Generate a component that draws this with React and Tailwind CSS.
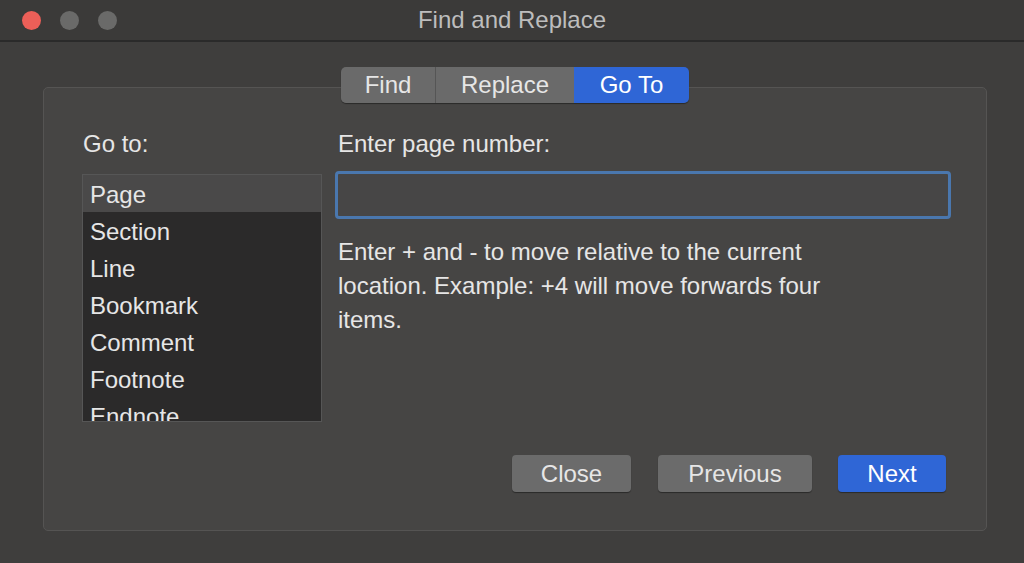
export default function App() {
  const items = ["Page", "Section", "Line", "Bookmark", "Comment", "Footnote", "Endnote"];
  return (
    <div className="w-[1024px] h-[563px] overflow-hidden bg-[#3f3e3d] text-[#e6e6e6] flex flex-col" style={{ fontFamily: '"Liberation Sans", Arial, sans-serif' }}>
      <div className="h-[42px] shrink-0 bg-[#3b3a39] border-b-2 border-[#2a2a2a] flex items-center relative">
        <div className="flex gap-[19px] pl-[22px]">
          <div className="w-[19px] h-[19px] rounded-full bg-[#ec5f58]" />
          <div className="w-[19px] h-[19px] rounded-full bg-[#6a6a69]" />
          <div className="w-[19px] h-[19px] rounded-full bg-[#6a6a69]" />
        </div>
        <div className="absolute left-0 right-0 text-center text-[24px] text-[#bdbdbd] pointer-events-none">Find and Replace</div>
      </div>
      <div className="relative flex-1 pl-[43px] pr-[37px] pt-[45px] pb-[32px]">
        <div className="absolute left-[341px] top-[25px] flex h-[36px] rounded-[5px] overflow-hidden text-[24px] shadow-[0_1px_1px_rgba(0,0,0,0.4)] z-10">
          <div className="w-[95px] bg-[#6a6a6a] flex items-center justify-center border-r border-[#555]">Find</div>
          <div className="w-[138px] bg-[#6a6a6a] flex items-center justify-center">Replace</div>
          <div className="w-[115px] bg-[#2f66d6] text-white flex items-center justify-center">Go To</div>
        </div>
        <div className="h-full bg-[#464544] border border-[#555453] rounded-[5px] flex pl-[38px] pr-[35px] pt-[41px]">
          <div className="w-[240px] shrink-0 flex flex-col">
            <div className="text-[24px] h-[30px] leading-[30px] ml-[1px]">Go to:</div>
            <div className="mt-[15px] h-[248px] border border-[#565656] bg-[#2b2a2a] overflow-hidden pt-0">
              {items.map((t, i) => (
                <div key={t} className={`h-[37px] leading-[40px] pl-[7px] text-[24px] ${i === 0 ? "bg-[#4a4949]" : ""}`}>{t}</div>
              ))}
            </div>
          </div>
          <div className="flex-1 ml-[13px] flex flex-col">
            <div className="text-[24px] h-[30px] leading-[30px] ml-[3px]">Enter page number:</div>
            <div className="mt-[12px] h-[48px] rounded-[4px] border-[3px] border-[#4a77ae] bg-[#474646]" />
            <div className="mt-[16px] ml-[3px] text-[24px] leading-[34px] w-[540px]">Enter + and - to move relative to the current location. Example: +4 will move forwards four items.</div>
            <div className="mt-auto mb-[38px] mr-[5px] flex justify-end gap-[27px] text-[24px]">
              <div className="w-[119px] h-[37px] rounded-[4px] bg-[#6b6b6b] flex items-center justify-center shadow-[0_1px_1px_rgba(0,0,0,0.4)]">Close</div>
              <div className="w-[154px] h-[37px] rounded-[4px] bg-[#6b6b6b] flex items-center justify-center shadow-[0_1px_1px_rgba(0,0,0,0.4)]">Previous</div>
              <div className="w-[108px] h-[37px] rounded-[4px] bg-[#2f66d6] text-white flex items-center justify-center shadow-[0_1px_1px_rgba(0,0,0,0.4)] ml-[-1px]">Next</div>
            </div>
          </div>
        </div>
      </div>
    </div>
  );
}
